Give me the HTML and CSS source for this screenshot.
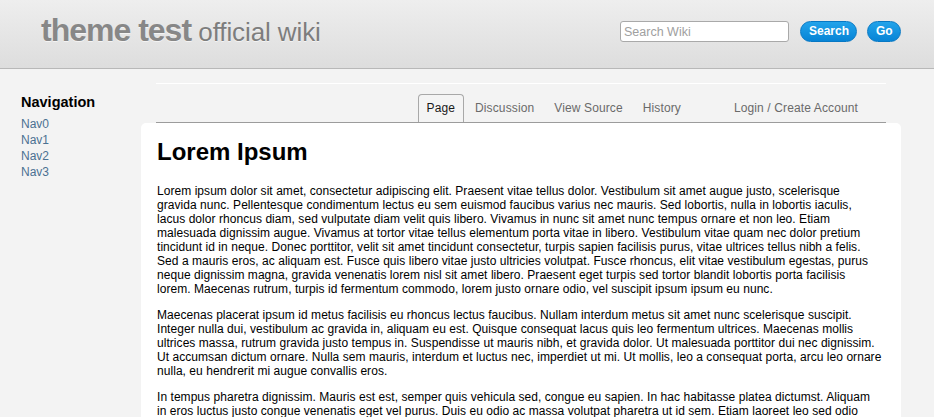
FILE: index.html
```html
<!DOCTYPE html>
<html lang="en">
<head>
<meta charset="utf-8">
<title>theme test official wiki</title>
<link rel="stylesheet" href="styles.css">
</head>
<body>
<header class="site-header">
  <div class="site-title"><span class="title-main">theme test</span> <span class="title-sub">official wiki</span></div>
  <form class="search-form">
    <input class="search-input" type="text" placeholder="Search Wiki">
    <button class="btn btn-search" type="button">Search</button>
    <button class="btn btn-go" type="button">Go</button>
  </form>
</header>
<div class="layout">
  <aside class="sidebar">
    <h3 class="nav-heading">Navigation</h3>
    <ul class="nav-list">
      <li><a href="#">Nav0</a></li>
      <li><a href="#">Nav1</a></li>
      <li><a href="#">Nav2</a></li>
      <li><a href="#">Nav3</a></li>
    </ul>
  </aside>
  <main class="main">
    <nav class="tabbar">
      <ul class="tabs">
        <li class="tab active">Page</li>
        <li class="tab">Discussion</li>
        <li class="tab">View Source</li>
        <li class="tab">History</li>
      </ul>
      <div class="tab account">Login / Create Account</div>
    </nav>
    <article class="content">
      <h1 class="page-title">Lorem Ipsum</h1>
      <p>Lorem ipsum dolor sit amet, consectetur adipiscing elit. Praesent vitae tellus dolor. Vestibulum sit amet augue justo, scelerisque<br>
      gravida nunc. Pellentesque condimentum lectus eu sem euismod faucibus varius nec mauris. Sed lobortis, nulla in lobortis iaculis,<br>
      lacus dolor rhoncus diam, sed vulputate diam velit quis libero. Vivamus in nunc sit amet nunc tempus ornare et non leo. Etiam<br>
      malesuada dignissim augue. Vivamus at tortor vitae tellus elementum porta vitae in libero. Vestibulum vitae quam nec dolor pretium<br>
      tincidunt id in neque. Donec porttitor, velit sit amet tincidunt consectetur, turpis sapien facilisis purus, vitae ultrices tellus nibh a felis.<br>
      Sed a mauris eros, ac aliquam est. Fusce quis libero vitae justo ultricies volutpat. Fusce rhoncus, elit vitae vestibulum egestas, purus<br>
      neque dignissim magna, gravida venenatis lorem nisl sit amet libero. Praesent eget turpis sed tortor blandit lobortis porta facilisis<br>
      lorem. Maecenas rutrum, turpis id fermentum commodo, lorem justo ornare odio, vel suscipit ipsum ipsum eu nunc.</p>
      <p>Maecenas placerat ipsum id metus facilisis eu rhoncus lectus faucibus. Nullam interdum metus sit amet nunc scelerisque suscipit.<br>
      Integer nulla dui, vestibulum ac gravida in, aliquam eu est. Quisque consequat lacus quis leo fermentum ultrices. Maecenas mollis<br>
      ultrices massa, rutrum gravida justo tempus in. Suspendisse ut mauris nibh, et gravida dolor. Ut malesuada porttitor dui nec dignissim.<br>
      Ut accumsan dictum ornare. Nulla sem mauris, interdum et luctus nec, imperdiet ut mi. Ut mollis, leo a consequat porta, arcu leo ornare<br>
      nulla, eu hendrerit mi augue convallis eros.</p>
      <p>In tempus pharetra dignissim. Mauris est est, semper quis vehicula sed, congue eu sapien. In hac habitasse platea dictumst. Aliquam<br>
      in eros luctus justo congue venenatis eget vel purus. Duis eu odio ac massa volutpat pharetra ut id sem. Etiam laoreet leo sed odio<br>
      sollicitudin a fermentum nunc ultrices. Nam vel metus sit amet nisi pretium dapibus. Cras porta aliquet turpis, sed vulputate libero.</p>
    </article>
  </main>
</div>
</body>
</html>
```

FILE: styles.css
```css
* {
  box-sizing: border-box;
}

html, body {
  margin: 0;
  padding: 0;
}

body {
  background: #f3f3f3;
  font-family: "Liberation Sans", Arial, Helvetica, sans-serif;
  color: #000;
  font-size: 12px;
}

.site-header {
  height: 69px;
  background: linear-gradient(to bottom, #eeeeee 0%, #dddddd 100%);
  border-bottom: 1px solid #b8b8b8;
  display: flex;
  justify-content: space-between;
  align-items: flex-start;
  padding: 0 33px 0 41px;
}

.site-title {
  padding-top: 14px;
  line-height: 32px;
  font-size: 26px;
  color: #878787;
  text-shadow: 0 1px 0 rgba(255, 255, 255, 0.6);
  white-space: nowrap;
}

.title-main {
  font-size: 32px;
  font-weight: bold;
  letter-spacing: -1px;
}

.title-sub {
  font-size: 26px;
  letter-spacing: -0.1px;
  color: #7d7d7d;
}

.search-form {
  margin: 21px 0 0 0;
  display: flex;
  align-items: center;
}

.search-input {
  width: 169px;
  height: 21px;
  border: 1px solid #a9a9a9;
  border-radius: 3px;
  background: #fff;
  padding: 0 3px;
  font-family: "Liberation Sans", Arial, sans-serif;
  font-size: 12.5px;
  color: #333;
  outline: none;
}

.search-input::placeholder {
  color: #a0a0a0;
}

.btn {
  height: 21px;
  border: 1px solid #0778c4;
  border-radius: 11px;
  background: linear-gradient(to bottom, #22a3ea 0%, #0784d6 100%);
  color: #fff;
  font-family: "Liberation Sans", Arial, sans-serif;
  font-size: 12px;
  font-weight: bold;
  padding: 0 8px;
  line-height: 19px;
  cursor: pointer;
}

.btn-search {
  margin-left: 11px;
  width: 57px;
}

.btn-go {
  margin-left: 10px;
  width: 34px;
}

.layout {
  display: flex;
  align-items: flex-start;
}

.sidebar {
  width: 141px;
  flex: 0 0 141px;
  padding: 25px 0 0 21px;
}

.nav-heading {
  margin: 0 0 5px 0;
  font-size: 14.5px;
  line-height: 17px;
  font-weight: bold;
  color: #000;
}

.nav-list {
  list-style: none;
  margin: 0;
  padding: 0;
}

.nav-list li {
  font-size: 12px;
  line-height: 16px;
}

.nav-list a {
  color: #4b7192;
  text-decoration: none;
}

.main {
  width: 760px;
  flex: 0 0 760px;
  padding-top: 14px;
}

.tabbar {
  margin: 0 15px;
  height: 40px;
  border-top: 1px solid #ffffff;
  border-bottom: 1px solid #9c9c9c;
  display: flex;
  justify-content: flex-end;
  align-items: flex-end;
  padding-right: 19px;
}

.tabs {
  list-style: none;
  margin: 0;
  padding: 0;
  display: flex;
  gap: 2px;
}

.tab {
  height: 28px;
  padding: 0 8px;
  border: 1px solid transparent;
  border-bottom: 0;
  line-height: 27px;
  font-size: 12px;
  letter-spacing: 0.12px;
  color: #6a6a6a;
  white-space: nowrap;
}

.tab.active {
  border-color: #a8a8a8;
  border-radius: 4px 4px 0 0;
  color: #1a1a1a;
  background: #f4f4f4;
}

.account {
  margin-left: 35px;
}

.content {
  background: #fff;
  border-radius: 5px 5px 0 0;
  padding: 15px 8px 20px 16px;
  min-height: 300px;
}

.page-title {
  margin: 0 0 18px 0;
  font-size: 24px;
  line-height: 28px;
  font-weight: bold;
}

.content p {
  margin: 0 0 12px 0;
  font-size: 12px;
  line-height: 14px;
  letter-spacing: 0.05px;
}
```
